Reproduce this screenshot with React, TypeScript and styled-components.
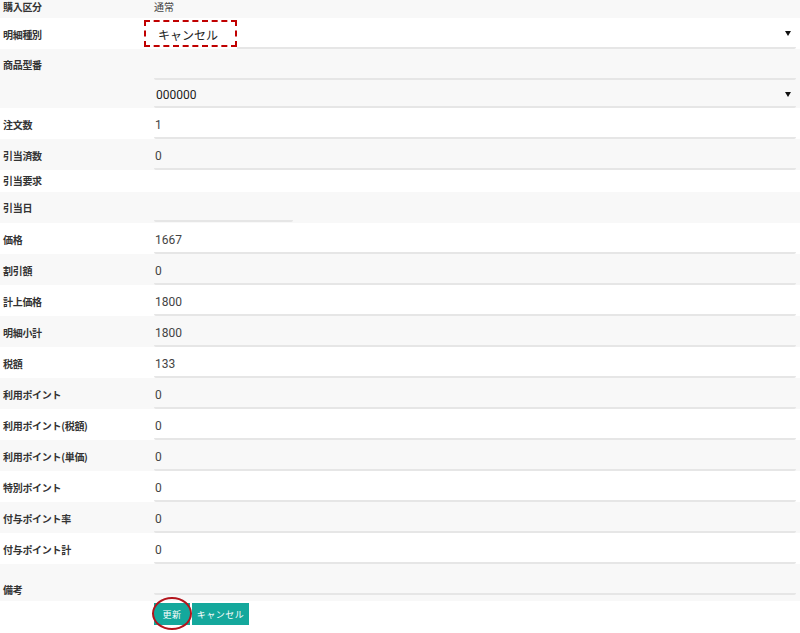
import styled, { createGlobalStyle } from "styled-components";

const GlobalStyle = createGlobalStyle`
  html, body {
    margin: 0;
    padding: 0;
    background: #ffffff;
    font-family: "Roboto", "Noto Sans CJK JP", sans-serif;
  }
`;

const Form = styled.div`
  width: 800px;
`;

const Row = styled.div<{ $shade: boolean; $h: number }>`
  display: grid;
  grid-template-columns: 154px 1fr;
  align-items: start;
  height: ${({ $h }) => $h}px;
  padding-right: 4px;
  box-sizing: border-box;
  background: ${({ $shade }) => ($shade ? "#f8f8f8" : "#ffffff")};
`;

const Label = styled.div<{ $top: number }>`
  padding: ${({ $top }) => $top}px 0 0 3px;
  font-family: "Noto Sans CJK JP", sans-serif;
  font-size: 10px;
  line-height: 12px;
  font-weight: 700;
  color: #333;
  letter-spacing: -0.3px;
  white-space: nowrap;
`;

const Plain = styled.div`
  padding-top: 1px;
  font-family: "Noto Sans CJK JP", sans-serif;
  font-size: 10px;
  line-height: 12px;
  color: #444;
`;

const Field = styled.div<{ $w?: number; $h?: number }>`
  position: relative;
  display: flex;
  align-items: center;
  justify-content: space-between;
  width: ${({ $w }) => ($w ? `${$w}px` : "auto")};
  height: ${({ $h }) => $h ?? 31}px;
  box-sizing: border-box;
  padding: 4px 5px 0 1px;
  border-bottom: 2px solid #e6e6e6;
  border-radius: 0 0 2px 2px;
  font-size: 12px;
  color: #444;
`;

const SelectText = styled.span<{ $pad: number }>`
  padding-left: ${({ $pad }) => $pad}px;
  font-family: "Roboto", "Noto Sans CJK JP", sans-serif;
  font-size: 12px;
  color: #222;
`;

const Arrow = styled.span`
  width: 0;
  height: 0;
  border-left: 3px solid transparent;
  border-right: 3px solid transparent;
  border-top: 5px solid #111;
  margin-top: -2px;
`;

const Stack = styled.div`
  display: flex;
  flex-direction: column;
`;

const Marker = styled.div`
  position: absolute;
  left: -10px;
  top: 2px;
  width: 93px;
  height: 27px;
  box-sizing: border-box;
  border: 2px dashed #c00000;
  box-shadow: 0 2px 0 #ffffff;
  pointer-events: none;
`;

const ButtonRow = styled.div`
  display: grid;
  grid-template-columns: 154px 1fr;
  padding-top: 2px;
  height: 32px;
  box-sizing: border-box;
`;

const Buttons = styled.div`
  display: flex;
  gap: 2px;
`;

const Button = styled.button<{ $w: number }>`
  position: relative;
  width: ${({ $w }) => $w}px;
  height: 22px;
  padding: 0;
  border: none;
  background: #14a89c;
  color: #ffffff;
  font-family: "Noto Sans CJK JP", sans-serif;
  font-size: 9px;
  letter-spacing: 0.5px;
  cursor: pointer;
`;

const Ring = styled.span`
  position: absolute;
  left: -2px;
  top: -6px;
  width: 40px;
  height: 33px;
  box-sizing: border-box;
  border: 2px solid #b3141c;
  border-radius: 50%;
  pointer-events: none;
`;

const numericRows: [string, string][] = [
  ["価格", "1667"],
  ["割引額", "0"],
  ["計上価格", "1800"],
  ["明細小計", "1800"],
  ["税額", "133"],
  ["利用ポイント", "0"],
  ["利用ポイント(税額)", "0"],
  ["利用ポイント(単価)", "0"],
  ["特別ポイント", "0"],
  ["付与ポイント率", "0"],
  ["付与ポイント計", "0"],
];

export default function App() {
  return (
    <Form>
      <GlobalStyle />
      <Row $shade $h={18}>
        <Label $top={1}>購入区分</Label>
        <Plain>通常</Plain>
      </Row>
      <Row $shade={false} $h={31}>
        <Label $top={11}>明細種別</Label>
        <Field>
          <SelectText $pad={3}>キャンセル</SelectText>
          <Arrow />
          <Marker />
        </Field>
      </Row>
      <Row $shade $h={59}>
        <Label $top={10}>商品型番</Label>
        <Stack>
          <Field $h={31} />
          <Field $h={28}>
            <SelectText $pad={1}>000000</SelectText>
            <Arrow />
          </Field>
        </Stack>
      </Row>
      <Row $shade={false} $h={31}>
        <Label $top={11}>注文数</Label>
        <Field>1</Field>
      </Row>
      <Row $shade $h={31}>
        <Label $top={11}>引当済数</Label>
        <Field>0</Field>
      </Row>
      <Row $shade={false} $h={22}>
        <Label $top={5}>引当要求</Label>
      </Row>
      <Row $shade $h={31}>
        <Label $top={10}>引当日</Label>
        <Field $w={139} $h={30} />
      </Row>
      {numericRows.map(([label, value], i) => (
        <Row key={label} $shade={i % 2 === 1} $h={31}>
          <Label $top={11}>{label}</Label>
          <Field>{value}</Field>
        </Row>
      ))}
      <Row $shade $h={37}>
        <Label $top={20}>備考</Label>
        <Field $h={31} />
      </Row>
      <ButtonRow>
        <span />
        <Buttons>
          <Button $w={36}>
            更新
            <Ring />
          </Button>
          <Button $w={57}>キャンセル</Button>
        </Buttons>
      </ButtonRow>
    </Form>
  );
}
